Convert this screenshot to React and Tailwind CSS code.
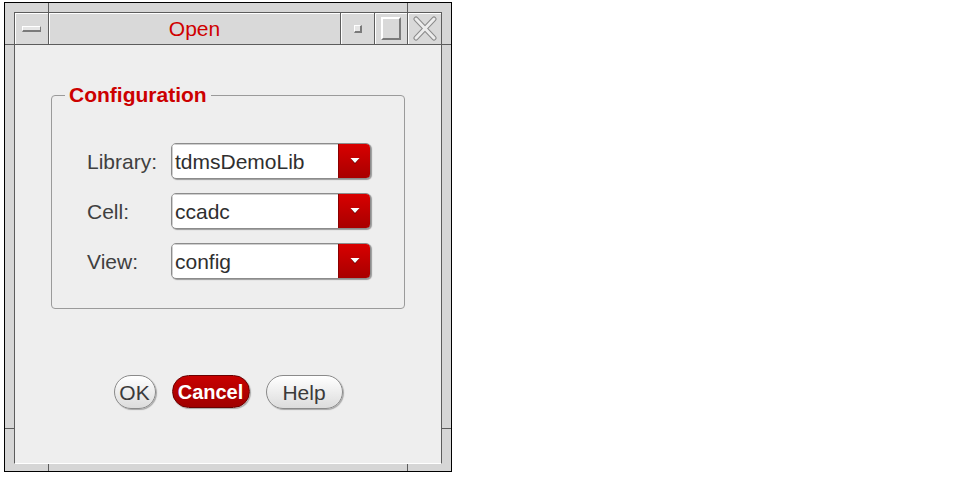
import React from "react";

const font = { fontFamily: '"Liberation Sans", Arial, sans-serif' };

function Dropdown({ value }) {
  return (
    <div className="flex h-[36px] w-[200px] rounded-[5px] border border-[#8c8c8c] bg-white shadow-[1px_1px_1px_rgba(0,0,0,0.35)] overflow-hidden">
      <div className="flex-1 flex items-center pl-[3px] text-[21px] text-[#2f2f2f] leading-none shadow-[inset_1px_1px_0_#cfcfcf]">
        {value}
      </div>
      <div className="w-[32px] flex items-center justify-center bg-gradient-to-b from-[#d80000] to-[#a80000] border-l border-[#8a0000]">
        <svg width="12" height="8" viewBox="0 0 12 8">
          <polygon points="2,2 10,2 6,7" fill="#5a0000" />
          <polygon points="1.5,1 10.5,1 6,6" fill="#ffffff" />
        </svg>
      </div>
    </div>
  );
}

function Row({ label, value }) {
  return (
    <div className="flex items-center h-[36px] pl-[35px]">
      <div className="w-[84px] text-[21px] text-[#404040] leading-none">{label}</div>
      <Dropdown value={value} />
    </div>
  );
}

export default function App() {
  return (
    <div className="w-[961px] h-[478px] bg-white overflow-hidden" style={font}>
      <div className="relative ml-[4px] mt-[2px] w-[448px] h-[470px] border border-black bg-[#d6d6d6] pt-[9px] pl-[9px] pr-[9px] pb-[7px] flex flex-col">
        {/* frame tick marks */}
        <div className="absolute left-[43px] top-0 w-px h-[9px] bg-[#5c5c5c]" />
        <div className="absolute left-[402px] top-0 w-px h-[9px] bg-[#5c5c5c]" />
        <div className="absolute left-[43px] bottom-0 w-px h-[7px] bg-[#5c5c5c]" />
        <div className="absolute left-[402px] bottom-0 w-px h-[7px] bg-[#5c5c5c]" />
        <div className="absolute left-0 top-[425px] w-[9px] h-px bg-[#5c5c5c]" />
        <div className="absolute right-0 top-[425px] w-[9px] h-px bg-[#5c5c5c]" />
        <div className="absolute left-0 top-[41px] w-[9px] h-px bg-[#5c5c5c]" />
        <div className="absolute right-0 top-[41px] w-[9px] h-px bg-[#5c5c5c]" />

        {/* title bar */}
        <div className="flex h-[33px] border-t border-b border-r border-[#5c5c5c] bg-[#d9d9d9]">
          <div className="w-[34px] border-l border-[#5c5c5c] shadow-[inset_1px_1px_0_#fff] flex items-center justify-center">
            <div className="w-[19px] h-[6px] bg-[#e6e6e6] border-t border-l border-white border-b-2 border-r border-b-[#7a7a7a] border-r-[#7a7a7a]" />
          </div>
          <div className="w-[292px] border-l border-[#5c5c5c] shadow-[inset_1px_1px_0_#fff] flex items-center justify-center text-[21px] text-[#d00000] leading-none">
            Open
          </div>
          <div className="w-[34px] border-l border-[#5c5c5c] shadow-[inset_1px_1px_0_#fff] flex items-center justify-center">
            <div className="w-[8px] h-[8px] bg-[#e6e6e6] border-t border-l border-white border-b-2 border-r-2 border-b-[#7a7a7a] border-r-[#7a7a7a]" />
          </div>
          <div className="w-[33px] border-l border-[#5c5c5c] shadow-[inset_1px_1px_0_#fff] flex items-center justify-center">
            <div className="w-[20px] h-[23px] border-t-2 border-l-2 border-white border-b-2 border-r-2 border-b-[#7a7a7a] border-r-[#7a7a7a]" />
          </div>
          <div className="w-[34px] border-l border-[#5c5c5c] shadow-[inset_1px_1px_0_#fff] flex items-center justify-center">
            <svg width="24" height="25" viewBox="0 0 24 25">
              <path d="M3 3 L21 22 M21 3 L3 22" stroke="#8a8a8a" strokeWidth="5" strokeLinecap="round" />
              <path d="M3 3 L21 22 M21 3 L3 22" stroke="#ececec" strokeWidth="3" strokeLinecap="round" />
            </svg>
          </div>
        </div>

        {/* content */}
        <div className="flex-1 flex flex-col bg-[#eeeeee] border-l border-r border-[#5c5c5c] border-b border-b-white">
          <fieldset className="mt-[40px] mx-[36px] border border-[#9a9a9a] rounded-[4px] pt-[38px] pb-[29px] flex flex-col gap-[14px]">
            <legend className="ml-[13px] px-[4px] text-[21px] font-bold text-[#cc0000] leading-[20px]">
              Configuration
            </legend>
            <Row label="Library:" value="tdmsDemoLib" />
            <Row label="Cell:" value="ccadc" />
            <Row label="View:" value="config" />
          </fieldset>

          <div className="mt-[66px] flex justify-center gap-[16px]">
            <div className="w-[42px] h-[34px] rounded-full border border-[#8a8a8a] bg-gradient-to-b from-white to-[#dcdcdc] shadow-[1px_1px_1px_rgba(0,0,0,0.3)] flex items-center justify-center text-[21px] text-[#3a3a3a] leading-none">
              OK
            </div>
            <div className="w-[78px] h-[33px] rounded-full border border-[#6a0000] bg-gradient-to-b from-[#c80000] to-[#a00000] shadow-[1px_1px_1px_rgba(0,0,0,0.3)] flex items-center justify-center text-[20px] font-bold text-white leading-none">
              Cancel
            </div>
            <div className="w-[77px] h-[34px] rounded-full border border-[#8a8a8a] bg-gradient-to-b from-white to-[#dcdcdc] shadow-[1px_1px_1px_rgba(0,0,0,0.3)] flex items-center justify-center text-[21px] text-[#3a3a3a] leading-none">
              Help
            </div>
          </div>
        </div>
      </div>
    </div>
  );
}
